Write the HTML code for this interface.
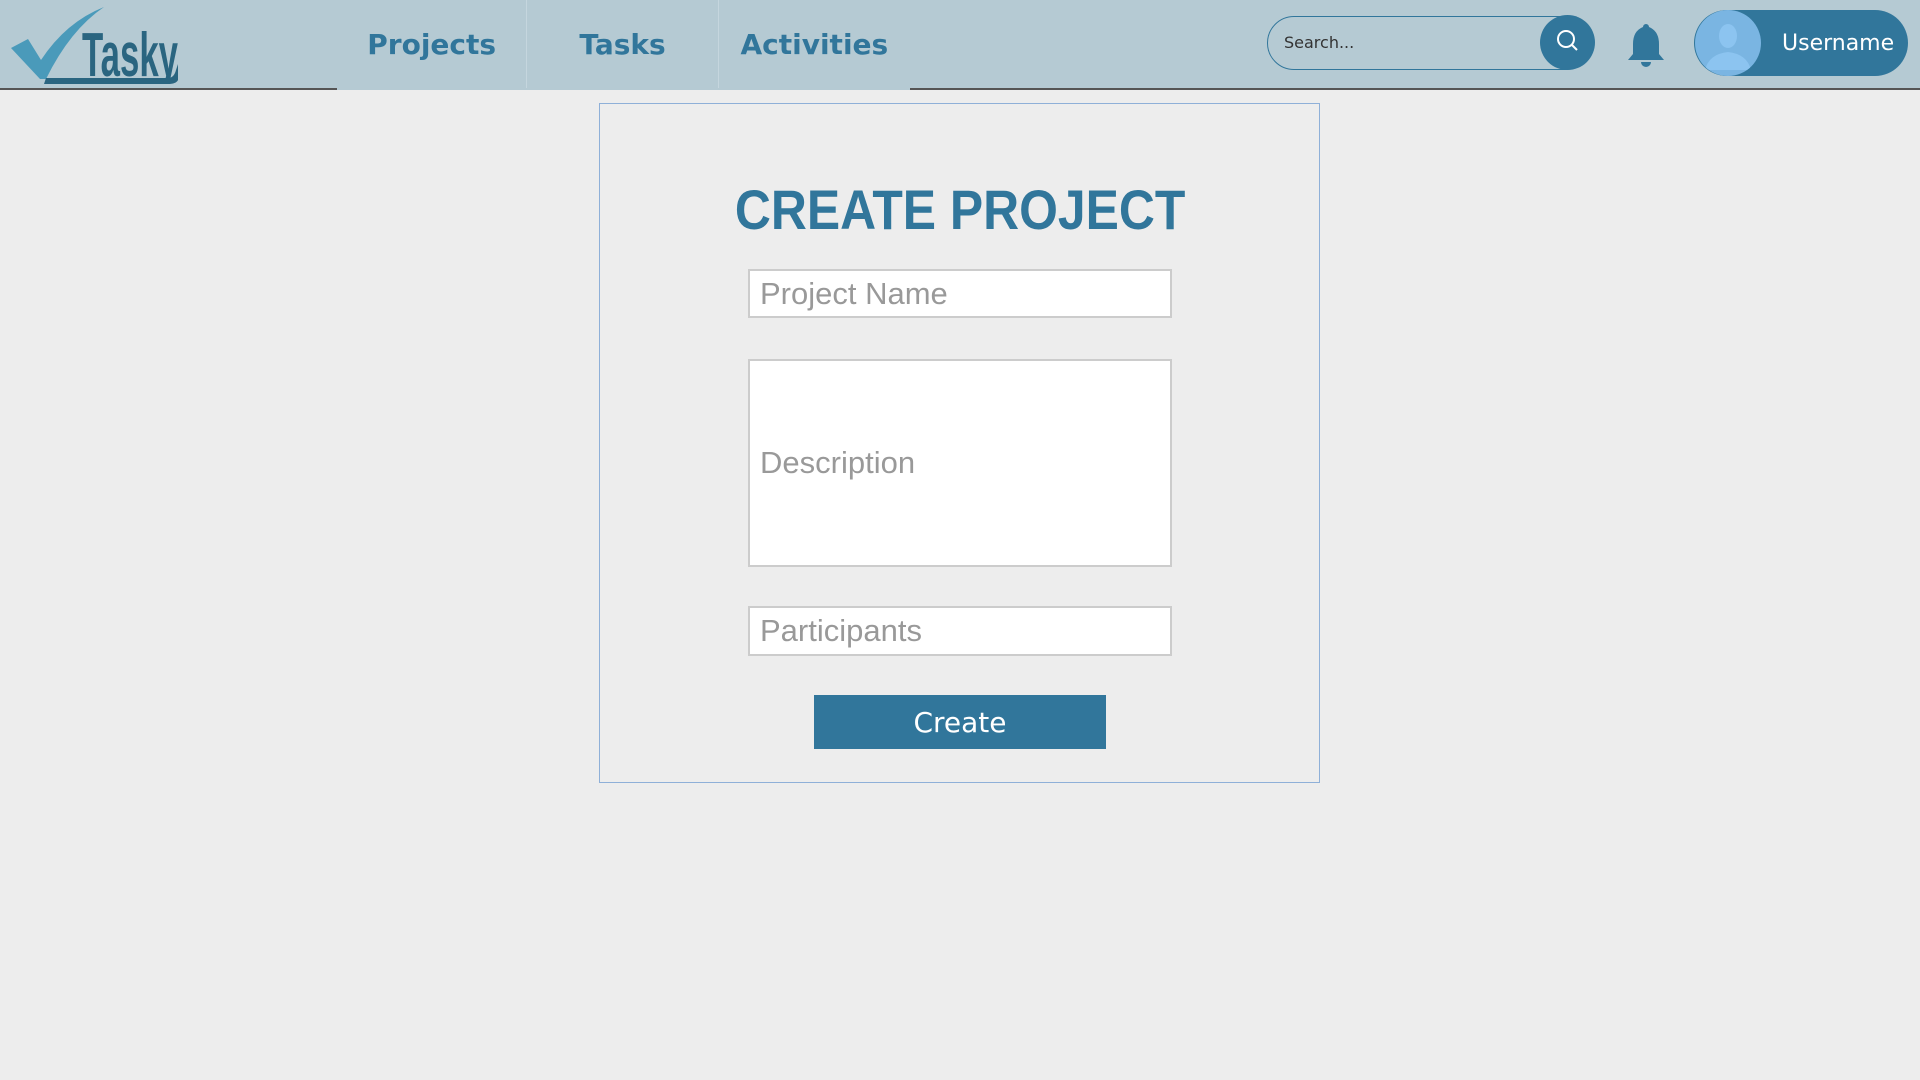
<!DOCTYPE html>
<html><head><meta charset="utf-8"><style>
body{margin:0;width:1920px;height:1080px;background:#ededed;font-family:"Liberation Sans",sans-serif;position:relative;overflow:hidden}
.hdr{position:absolute;left:0;top:0;width:1920px;height:88px;background:#b5cad3;border-bottom:2px solid #555}
.tabs{position:absolute;left:337px;top:0;height:90px;width:573px;display:flex;background:#b5cad3}
.tab{height:88px;display:flex;align-items:center;justify-content:center;font-family:"DejaVu Sans",sans-serif;font-weight:bold;font-size:28px;color:#31769b;border-right:1px solid #c5d6de}
.search{position:absolute;left:1267px;top:16px;width:325px;height:54px;border:1.5px solid #31769b;border-radius:27px;box-sizing:border-box}
.search span{position:absolute;left:16px;top:16px;font-family:"DejaVu Sans",sans-serif;font-size:16px;color:#333}
.sbtn{position:absolute;left:1540px;top:15px;width:55px;height:55px;border-radius:50%;background:#31769b}
.user{position:absolute;left:1694px;top:10px;width:214px;height:66px;border-radius:33px;background:#31769b}
.user span{position:absolute;left:88px;top:21px;font-family:"DejaVu Sans",sans-serif;font-size:22px;color:#fff}
.av{position:absolute;left:1695px;top:10px;width:66px;height:66px;border-radius:50%;background:#7ab5e2;overflow:hidden}
.card{position:absolute;left:599px;top:103px;width:721px;height:680px;border:1px solid #8fb0d8;box-sizing:border-box}
.title{position:absolute;left:0;top:178px;width:1920px;text-align:center;font-weight:bold;font-size:56px;color:#31769b;line-height:64px}
.in{position:absolute;left:748px;width:424px;background:#fff;border:2px solid #ccc;box-sizing:border-box;font-size:31px;color:#999;padding-left:10px;display:flex;align-items:center}
.btn{position:absolute;left:814px;top:695px;width:292px;height:54px;background:#31769b;color:#fff;font-family:"DejaVu Sans",sans-serif;font-size:28px;display:flex;align-items:center;justify-content:center}
</style></head><body>
<div class="hdr"></div>
<svg style="position:absolute;left:8px;top:4px" width="175" height="80" viewBox="0 0 175 80">
<path d="M3 44 L20 35 L33 56 Q58 18 96 3 Q62 26 38 75 L32 75 Z" fill="#4a9aba"/>
<text x="74" y="72" font-family="Liberation Sans" font-weight="bold" font-size="62" fill="#2a6580" textLength="96" lengthAdjust="spacingAndGlyphs">Tasky</text>
<path d="M38 74 L160 74 Q166 74 168 66 L170 60 L170 76 Q168 80 160 80 L36 80 Z" fill="#2a6580"/>
</svg>
<div class="tabs"><div class="tab" style="width:190px">Projects</div><div class="tab" style="width:191px">Tasks</div><div class="tab" style="width:192px;border-right:none">Activities</div></div>
<div class="search"><span>Search...</span></div>
<div class="sbtn"><svg width="55" height="55"><circle cx="26" cy="24" r="8" fill="none" stroke="#fff" stroke-width="2"/><line x1="32" y1="30" x2="37" y2="35" stroke="#fff" stroke-width="2"/></svg></div>
<svg style="position:absolute;left:1626px;top:22px" width="40" height="46" viewBox="0 0 40 46"><path d="M20 2 a3 3 0 0 1 3 3 Q33 9 33 22 L33 32 L38 38 L2 38 L7 32 L7 22 Q7 9 17 5 a3 3 0 0 1 3 -3Z" fill="#31769b"/><path d="M15 40 h10 a5 5 0 0 1 -10 0Z" fill="#31769b"/></svg>
<div class="user"><span>Username</span></div>
<div class="av"><svg width="66" height="66"><ellipse cx="33" cy="26" rx="9" ry="12" fill="#8cc4f0"/><path d="M10 60 Q14 44 33 42 Q52 44 56 60Z" fill="#8cc4f0"/></svg></div>
<div class="card"></div>
<div class="title"><span style="display:inline-block;transform:scaleX(0.89)">CREATE PROJECT</span></div>
<div class="in" style="top:269px;height:49px">Project Name</div>
<div class="in" style="top:359px;height:208px">Description</div>
<div class="in" style="top:606px;height:50px">Participants</div>
<div class="btn">Create</div>
</body></html>
